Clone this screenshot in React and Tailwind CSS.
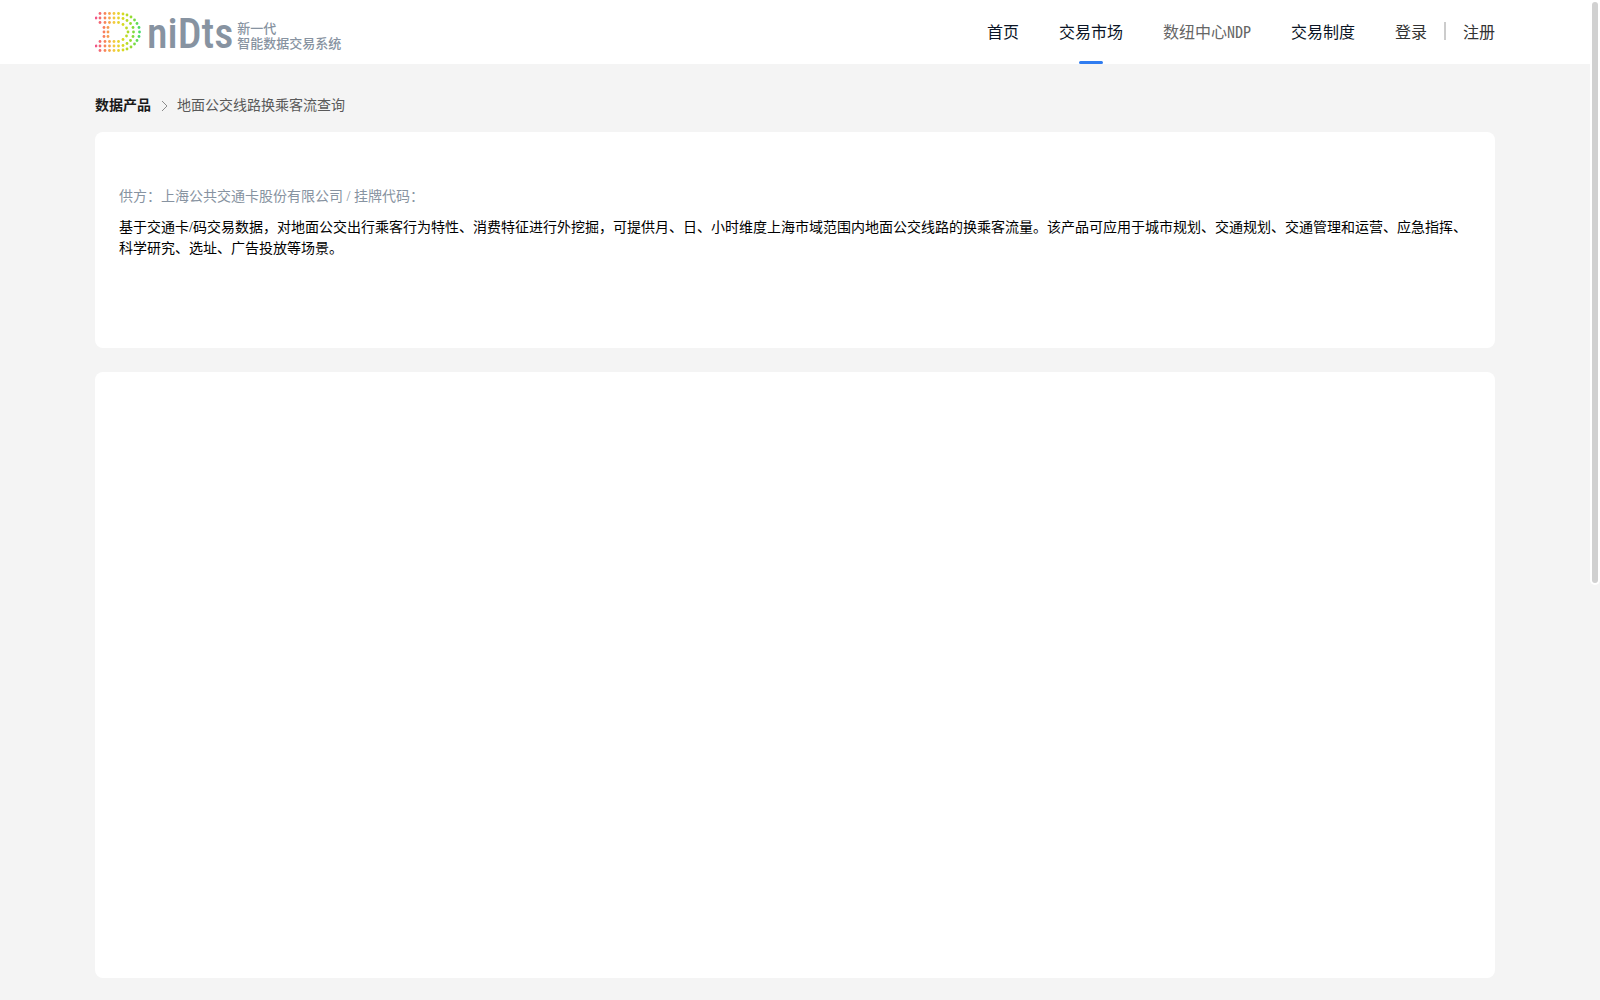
const NAV = [
  { label: "首页", tone: "text-[#0b1526]" },
  { label: "交易市场", tone: "text-[#0b1526]", active: true },
  { label: "数纽中心NDP", tone: "text-[#666666]" },
  { label: "交易制度", tone: "text-[#0b1526]" },
];

const MIRRORED_DOTS = [
  // outer ring
  [5, 1.5], [10, 1.5], [14.5, 1.5], [19, 1.5], [23.5, 1.5], [28, 2], [32, 3], [36, 5], [39.5, 8], [42, 11.5], [44, 15.5],
  // middle ring
  [1, 6], [5, 6], [10, 6], [14.5, 6], [19, 6], [23.5, 6], [28, 6.5], [32, 8.5], [35.5, 11.5], [38, 15.5],
  // inner ring
  [5, 10.5], [10, 10.5], [14.5, 10.5], [19, 10.5], [23.5, 10.5], [28, 12.5], [31.5, 16],
  // stem
  [9, 15.5], [13, 15.5],
];
const CENTRE_DOTS = [[9, 20], [13, 20], [33, 20], [38.5, 20], [44.5, 20]];
const DOTS = [...MIRRORED_DOTS, ...MIRRORED_DOTS.map(([x, y]) => [x, 40 - y]), ...CENTRE_DOTS];

function LogoMark() {
  return (
    <svg viewBox="0 0 48 40" className="h-10 w-12" aria-hidden="true">
      <defs>
        <linearGradient id="spectrum" gradientUnits="userSpaceOnUse" x1="0" y1="0" x2="46" y2="0">
          <stop offset="0" stopColor="#f0508c" />
          <stop offset="0.2" stopColor="#f87f5a" />
          <stop offset="0.42" stopColor="#f4cc3c" />
          <stop offset="0.62" stopColor="#d6da1e" />
          <stop offset="0.8" stopColor="#8edb32" />
          <stop offset="1" stopColor="#3cdb70" />
        </linearGradient>
      </defs>
      <g fill="url(#spectrum)">
        {DOTS.map(([x, y]) => (
          <circle key={x + "," + y} cx={x} cy={y} r={1.4} />
        ))}
      </g>
    </svg>
  );
}

function Logo() {
  return (
    <a href="#" className="flex items-center text-[#8793a1]">
      <LogoMark />
      <span className="px-1 pt-1 font-['Roboto_Condensed',Roboto,sans-serif] text-[42px] font-medium leading-none">niDts</span>
      <span className="flex flex-col pt-2 text-[13px] font-medium leading-[15px]">
        <span>新一代</span>
        <span>智能数据交易系统</span>
      </span>
    </a>
  );
}

function Header() {
  return (
    <header className="bg-white px-[95px]">
      <div className="flex h-16 items-center justify-between">
        <Logo />
        <div className="flex h-full items-center gap-10 font-['Noto_Sans_CJK_SC',sans-serif] text-base">
          <nav className="flex h-full gap-10">
            {NAV.map(({ label, tone, active }) => (
              <a
                key={label}
                href="#"
                className={"relative flex h-full items-center pb-[2px] [font-feature-settings:'hwid'] " + tone}
              >
                {label}
                {active && (
                  <span className="absolute bottom-0 left-1/2 h-[3px] w-6 -translate-x-1/2 rounded-sm bg-[#2f7cf0]" />
                )}
              </a>
            ))}
          </nav>
          <div className="flex items-center pb-[2px] text-[#333333]">
            <a href="#">登录</a>
            <span className="mx-[17px] h-[18px] w-[2px] bg-[#cccccc]" />
            <a href="#">注册</a>
          </div>
        </div>
      </div>
    </header>
  );
}

export default function App() {
  return (
    <div className="flex h-screen overflow-hidden bg-[#f4f4f4] font-['Liberation_Serif','Noto_Sans_CJK_SC',sans-serif]">
      <div className="min-w-0 flex-1">
        <Header />
        <main className="px-[95px]">
          <nav className="flex items-center pt-8 text-sm">
            <a href="#" className="font-bold text-[#1a1a1a]">数据产品</a>
            <svg viewBox="0 0 14 14" className="mx-[6px] size-[14px]" fill="none" stroke="#8c8c8c" aria-hidden="true">
              <path d="M5 2l5 5-5 5" />
            </svg>
            <span className="text-[#595959]">地面公交线路换乘客流查询</span>
          </nav>
          <section className="mt-4 rounded-lg bg-white px-6 pb-[89px] pt-[54px] text-sm leading-[21px]">
            <p className="text-[#8793a1]">供方：上海公共交通卡股份有限公司 / 挂牌代码：</p>
            <p className="mt-[10px] text-black">
              基于交通卡/码交易数据，对地面公交出行乘客行为特性、消费特征进行外挖掘，可提供月、日、小时维度上海市域范围内地面公交线路的换乘客流量。该产品可应用于城市规划、交通规划、交通管理和运营、应急指挥、科学研究、选址、广告投放等场景。
            </p>
          </section>
          <section className="mt-6 h-[606px] rounded-lg bg-white" />
        </main>
      </div>
      <div className="w-[10px]" aria-hidden="true">
        <div className="rounded-b-full bg-white p-[2px]">
          <div className="h-[581px] rounded-full bg-[#d1d1d1]" />
        </div>
      </div>
    </div>
  );
}
